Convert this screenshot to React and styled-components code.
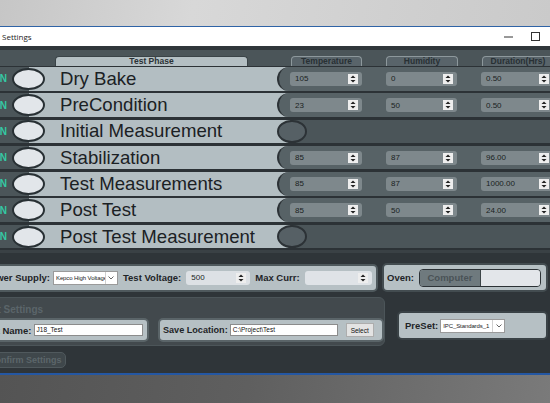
import React from 'react';
import styled, { createGlobalStyle } from 'styled-components';

const GlobalStyle = createGlobalStyle`
  html, body {
    margin: 0;
    padding: 0;
    width: 550px;
    height: 403px;
    overflow: hidden;
    background: #6a6a6a;
    font-family: "Liberation Sans", Arial, sans-serif;
  }
`;

const phases = [
  { name: 'Dry Bake', values: ['105', '0', '0.50'] },
  { name: 'PreCondition', values: ['23', '50', '0.50'] },
  { name: 'Initial Measurement' },
  { name: 'Stabilization', values: ['85', '87', '96.00'] },
  { name: 'Test Measurements', values: ['85', '87', '1000.00'] },
  { name: 'Post Test', values: ['85', '50', '24.00'] },
  { name: 'Post Test Measurement' },
];

const DesktopTop = styled.div`
  height: 26px;
  background: linear-gradient(100deg, #c6c6c6 0%, #d8d8d8 35%, #d0d0d0 70%, #cacaca 100%);
`;

const DesktopBottom = styled.div`
  height: 28px;
  background: linear-gradient(100deg, #545454 0%, #5f5f5f 45%, #7a7a7a 100%);
`;

const Window = styled.div`
  margin-left: -24px;
  width: 600px;
  border-top: 1px solid #2f63a6;
  border-bottom: 2px solid #2457a3;
`;

const TitleBar = styled.div`
  height: 19px;
  background: #ffffff;
  display: flex;
  align-items: center;
  padding-left: 26px;
  font-family: "Open Sans", "Liberation Sans", sans-serif;
  font-size: 8px;
  color: #1c1c1c;
`;

const TitleText = styled.span`
  flex: 1;
`;

const WinButton = styled.span`
  width: 27px;
  display: flex;
  justify-content: center;
  align-items: center;
`;

const TopStrip = styled.div`
  height: 4px;
  background: #30363a;
`;

const PhaseArea = styled.div`
  background: #4b5559;
  padding-top: 6px;
`;

const Headers = styled.div`
  display: flex;
  height: 10px;
  align-items: flex-end;
`;

const Tab = styled.div`
  margin-left: ${(p) => p.offset}px;
  width: ${(p) => p.width}px;
  height: 10px;
  box-sizing: border-box;
  border: 1px solid ${(p) => (p.light ? '#3a4347' : '#8d989c')};
  border-bottom: none;
  border-radius: 4px 4px 0 0;
  background: ${(p) => (p.light ? '#b4bfc3' : '#59646a')};
  color: ${(p) => (p.light ? '#2b3236' : '#283034')};
  font-size: 8.5px;
  font-weight: bold;
  text-align: center;
  line-height: 9px;
  white-space: nowrap;
  overflow: hidden;
`;

const Rows = styled.div`
  display: flex;
  flex-direction: column;
  gap: 2.8px;
  background: #2c3236;
  padding: 1px 0 2px;
`;

const Row = styled.div`
  display: flex;
  align-items: center;
  height: 23.5px;
  background: #4b5559;
`;

const OnText = styled.span`
  margin-left: 16px;
  width: 20px;
  font-size: 10px;
  font-weight: bold;
  color: #34c9a4;
`;

const Toggle = styled.span`
  width: 33px;
  height: 22px;
  box-sizing: border-box;
  border: 2px solid #283034;
  border-radius: 50%;
  background: #e2e6ea;
  margin-right: -16px;
  position: relative;
  z-index: 1;
`;

const LabelArea = styled.div`
  width: 261px;
  height: 100%;
  box-sizing: border-box;
  padding-left: 31px;
  display: flex;
  align-items: center;
  background: #b3bec2;
  font-size: 18.6px;
  color: #1b2124;
  white-space: nowrap;
`;

const Band = styled.div`
  flex: 1;
  margin-left: -13px;
  height: 100%;
  box-sizing: border-box;
  border-left: 2px solid #2c3236;
  border-radius: 13px 0 0 13px;
  background: #576266;
  display: flex;
  align-items: center;
  padding-left: 11px;
  gap: 24px;
  position: relative;
  z-index: 1;
`;

const Cap = styled.div`
  margin-left: -13px;
  width: 30px;
  height: 100%;
  box-sizing: border-box;
  border: 2px solid #2c3236;
  border-radius: 50%;
  background: #566065;
  position: relative;
  z-index: 1;
`;

const NumInput = styled.div`
  width: ${(p) => p.width || 72}px;
  height: 14px;
  border-radius: 3px;
  background: ${(p) => p.bg || '#7e888c'};
  display: flex;
  align-items: center;
  padding-left: 5px;
  padding-right: 4px;
  box-sizing: border-box;
  font-size: 8px;
  color: #1a1f22;
`;

const NumText = styled.span`
  flex: 1;
`;

const SpinBox = styled.span`
  width: 10px;
  height: 10px;
  background: #eeeeee;
  display: flex;
  align-items: center;
  justify-content: center;
`;

const Spinner = () => (
  <SpinBox>
    <svg width="6" height="8" viewBox="0 0 6 8">
      <path d="M3 0.5 L5.5 3 L0.5 3 Z" fill="#222" />
      <path d="M3 7.5 L5.5 5 L0.5 5 Z" fill="#222" />
    </svg>
  </SpinBox>
);

const LowerArea = styled.div`
  background: #2f3539;
  border-top: 3px solid #3a4145;
  padding-top: 10px;
  padding-bottom: 5px;
`;

const PanelRow = styled.div`
  display: flex;
  align-items: ${(p) => p.align || 'center'};
  margin-top: ${(p) => p.top || 0}px;
`;

const Panel = styled.div`
  margin-left: ${(p) => p.offset || 0}px;
  margin-top: ${(p) => p.top || 0}px;
  width: ${(p) => p.width}px;
  height: ${(p) => p.height || 28}px;
  box-sizing: border-box;
  border: 2px solid ${(p) => p.edge || '#4f595d'};
  border-radius: 5px;
  background: #b6c0c4;
  display: flex;
  align-items: center;
  padding-left: ${(p) => p.pad || 0}px;
  flex-shrink: 0;
`;

const Label = styled.span`
  font-size: ${(p) => p.size || 9.5}px;
  font-weight: bold;
  color: #1e2427;
  margin-left: ${(p) => p.gap || 0}px;
  white-space: nowrap;
`;

const SelectBox = styled.div`
  width: ${(p) => p.width}px;
  height: 14px;
  margin-left: ${(p) => p.gap || 0}px;
  box-sizing: border-box;
  background: #ffffff;
  border: 1px solid #9a9a9a;
  display: flex;
  align-items: center;
  font-size: 6px;
  letter-spacing: -0.1px;
  color: #1a1a1a;
  padding-left: 2px;
  overflow: hidden;
`;

const SelectText = styled.span`
  flex: 1;
  white-space: nowrap;
  overflow: hidden;
`;

const Chevron = styled.span`
  width: 11px;
  height: 100%;
  border-left: 1px solid #d0d0d0;
  display: flex;
  align-items: center;
  justify-content: center;
  flex-shrink: 0;
`;

const ChevronIcon = () => (
  <Chevron>
    <svg width="6" height="4" viewBox="0 0 6 4">
      <path d="M0.5 0.5 L3 3 L5.5 0.5" stroke="#555" strokeWidth="0.9" fill="none" />
    </svg>
  </Chevron>
);

const Spaced = styled.div`
  margin-left: ${(p) => p.gap || 0}px;
`;

const OvenToggle = styled.div`
  margin-left: 5px;
  width: 122px;
  height: 18px;
  box-sizing: border-box;
  border: 1.5px solid #2c3236;
  border-radius: 4px;
  overflow: hidden;
  display: flex;
`;

const OvenSide = styled.div`
  width: 60px;
  background: #6f7a7e;
  color: #4a5357;
  font-size: 9.5px;
  font-weight: bold;
  display: flex;
  align-items: center;
  justify-content: center;
  border-right: 1px solid #3d4548;
`;

const OvenBlank = styled.div`
  flex: 1;
  background: #e3e6ea;
`;

const SettingsGroup = styled.div`
  width: 409px;
  height: 49px;
  box-sizing: border-box;
  background: #42494d;
  border: 1px solid #4c5559;
  border-radius: 6px;
  padding-top: 6px;
  flex-shrink: 0;
`;

const GroupTitle = styled.div`
  font-size: 10px;
  font-weight: bold;
  color: #5b656a;
  padding-left: 4px;
  height: 14px;
`;

const TextField = styled.div`
  width: ${(p) => p.width}px;
  height: 12px;
  margin-left: ${(p) => p.gap || 0}px;
  box-sizing: border-box;
  background: #ffffff;
  border: 1px solid #8c8c8c;
  font-size: 6.5px;
  color: #111;
  padding-left: 2px;
  line-height: 10px;
  flex-shrink: 0;
`;

const SmallButton = styled.div`
  margin-left: 8px;
  width: 28px;
  height: 14px;
  box-sizing: border-box;
  background: #e3e3e3;
  border: 1px solid #adadad;
  font-size: 6.5px;
  color: #111;
  display: flex;
  align-items: center;
  justify-content: center;
  flex-shrink: 0;
`;

const ConfirmButton = styled.div`
  margin: 6px 0 0 6px;
  width: 84px;
  height: 16px;
  box-sizing: border-box;
  background: #3f474b;
  border: 1px solid #50595d;
  border-radius: 5px;
  font-size: 9px;
  font-weight: bold;
  color: #5c666a;
  display: flex;
  align-items: center;
  padding-left: 6px;
  white-space: nowrap;
`;

export default function App() {
  return (
    <>
      <GlobalStyle />
      <DesktopTop />
      <Window>
        <TitleBar>
          <TitleText>Settings</TitleText>
          <WinButton>
            <svg width="9" height="9" viewBox="0 0 9 9">
              <path d="M0 5 H9" stroke="#333" strokeWidth="1" />
            </svg>
          </WinButton>
          <WinButton>
            <svg width="9" height="9" viewBox="0 0 9 9">
              <rect x="0.5" y="0.5" width="8" height="8" stroke="#333" strokeWidth="1" fill="none" />
            </svg>
          </WinButton>
          <WinButton />
        </TitleBar>
        <TopStrip />
        <PhaseArea>
          <Headers>
            <Tab light offset={79} width={193}>Test Phase</Tab>
            <Tab offset={43} width={71}>Temperature</Tab>
            <Tab offset={24} width={72}>Humidity</Tab>
            <Tab offset={24} width={72}>Duration(Hrs)</Tab>
          </Headers>
          <Rows>
            {phases.map((p) => (
              <Row key={p.name}>
                <OnText>ON</OnText>
                <Toggle />
                <LabelArea>{p.name}</LabelArea>
                {p.values ? (
                  <Band>
                    {p.values.map((v, i) => (
                      <NumInput key={i} width={i === 1 ? 71 : 72}>
                        <NumText>{v}</NumText>
                        <Spinner />
                      </NumInput>
                    ))}
                  </Band>
                ) : (
                  <Cap />
                )}
              </Row>
            ))}
          </Rows>
        </PhaseArea>
        <LowerArea>
          <PanelRow>
            <Panel width={402} pad={6}>
              <Label>Power Supply:</Label>
              <SelectBox width={65} gap={3}>
                <SelectText>Kepco High Voltage</SelectText>
                <ChevronIcon />
              </SelectBox>
              <Label gap={5}>Test Voltage:</Label>
              <Spaced gap={5}>
                <NumInput width={64} bg="#dde1e5">
                  <NumText>500</NumText>
                  <Spinner />
                </NumInput>
              </Spaced>
              <Label gap={5}>Max Curr:</Label>
              <Spaced gap={5}>
                <NumInput width={67} bg="#dfe3e7">
                  <NumText />
                  <Spinner />
                </NumInput>
              </Spaced>
            </Panel>
            <Panel offset={4} width={166} height={29} pad={3} edge="#434c50">
              <Label>Oven:</Label>
              <OvenToggle>
                <OvenSide>Computer</OvenSide>
                <OvenBlank />
              </OvenToggle>
            </Panel>
          </PanelRow>
          <PanelRow align="flex-start" top={5}>
            <SettingsGroup>
              <GroupTitle>Test Settings</GroupTitle>
              <PanelRow>
                <Panel width={172} height={24} pad={2} edge="#5a6468">
                  <Label>Test Name:</Label>
                  <TextField width={109} gap={2}>J18_Test</TextField>
                </Panel>
                <Panel offset={9} width={226} height={24} pad={3} edge="#5a6468">
                  <Label size={9.1}>Save Location:</Label>
                  <TextField width={108} gap={2}>C:\Project\Test</TextField>
                  <SmallButton>Select</SmallButton>
                </Panel>
              </PanelRow>
            </SettingsGroup>
            <Panel offset={12} top={14} width={151} height={29} pad={6} edge="#3a4246">
              <Label size={9.5}>PreSet:</Label>
              <SelectBox width={65} gap={2}>
                <SelectText>IPC_Standards_1</SelectText>
                <ChevronIcon />
              </SelectBox>
            </Panel>
          </PanelRow>
          <ConfirmButton>Confirm Settings</ConfirmButton>
        </LowerArea>
      </Window>
      <DesktopBottom />
    </>
  );
}
